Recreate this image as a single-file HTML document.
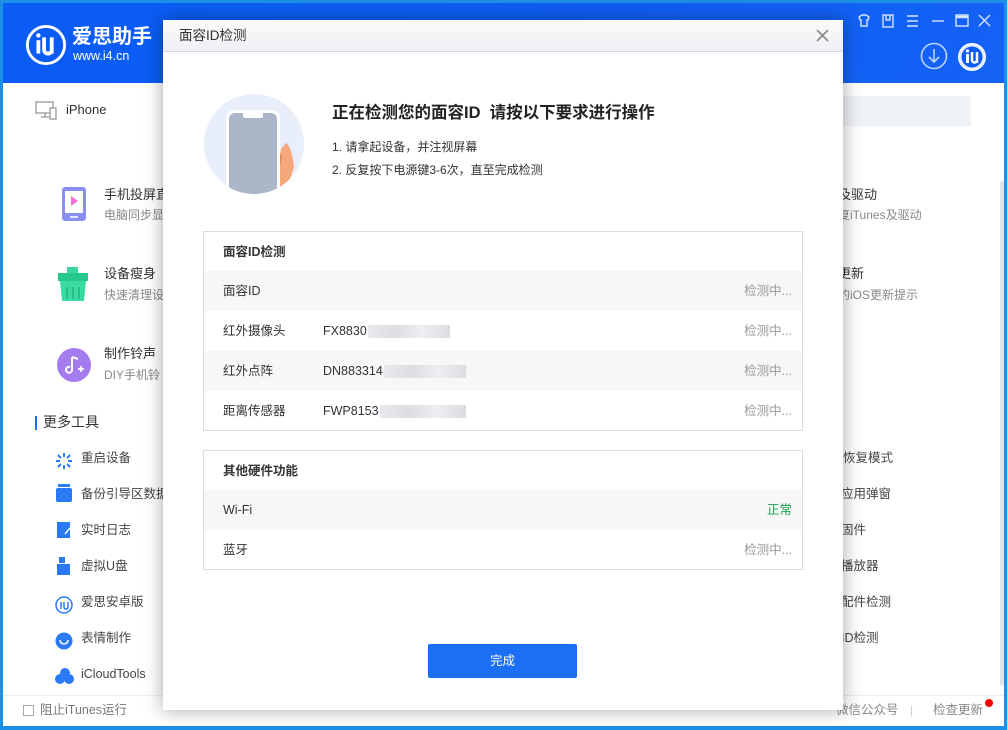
<!DOCTYPE html>
<html><head><meta charset="utf-8"><style>
*{margin:0;padding:0;box-sizing:border-box}
body{width:1007px;height:730px;overflow:hidden;background:#1e8fe6;font-family:"Liberation Sans","Noto Sans CJK SC",sans-serif;position:relative;line-height:1.2}
.abs{position:absolute}
.app{left:3px;top:3px;width:1001px;height:723px;background:#fff}
.hdr{left:0;top:0;width:1001px;height:80px;background:linear-gradient(120deg,#0a5cf5 0%,#0f5ff5 60%,#1463f5 100%)}
.t{position:absolute;white-space:nowrap;line-height:18px}
.lt{font-size:13px;color:#333}
.ls{font-size:12px;color:#888}
.tool{font-size:12.5px;color:#444}
.dlg{left:163px;top:20px;width:680px;height:690px;background:#fff;box-shadow:0 0 18px rgba(0,0,0,.35)}
.tb{left:0;top:0;width:680px;height:32px;background:linear-gradient(#fafbfc,#eef0f3);border-bottom:1px solid #d5d9e0}
.box{border:1px solid #dcdcdc;position:absolute;left:40px;width:600px}
.row{position:absolute;left:0;width:598px;height:40px;font-size:12.5px;color:#333;line-height:40px}
.row span{position:absolute;top:0;line-height:40px}
.g{background:#f7f7f7}
.st{right:10px;color:#999}
.blur{position:absolute;top:14px;height:13px;background:linear-gradient(90deg,#e8e9ee,#dcdee3,#eceef2,#dadce2)}
</style></head><body>
<div class="abs app">
 <div class="abs hdr">
  <svg class="abs" style="left:22px;top:21px" width="42" height="42" viewBox="0 0 44 44"><circle cx="22" cy="22" r="19.5" fill="none" stroke="#fff" stroke-width="3"/><rect x="12" y="17" width="4" height="14" fill="#fff"/><circle cx="14" cy="12" r="2.3" fill="#fff"/><path d="M20 14v13a4 4 0 0 0 8 0V14M28 14v17" fill="none" stroke="#fff" stroke-width="4"/></svg>
  <div class="t" style="left:69px;top:22px;color:#fff;font-size:20px;font-weight:bold;line-height:24px">爱思助手</div>
  <div class="t" style="left:70px;top:46px;color:#fff;font-size:12.5px;line-height:14px">www.i4.cn</div>
  <svg class="abs" style="left:852px;top:9px" width="145" height="18" viewBox="0 0 145 18" fill="none" stroke="#d6e4ff" stroke-width="1.4"><path d="M4 5l3-2h4l3 2-1 3h-1v6H6V8H5z"/><rect x="28" y="3" width="10" height="12"/><path d="M31 3v5h4V3"/><path d="M52 4h11M52 9h11M52 14h11"/><path d="M77 9h12"/><rect x="101" y="3" width="12" height="11"/><path d="M101 5h12" stroke-width="2.5"/><path d="M124 3l11 11M135 3l-11 11"/></svg>
  <svg class="abs" style="left:917px;top:39px" width="28" height="28"><circle cx="14" cy="14" r="12.5" fill="none" stroke="#bcd3ff" stroke-width="1.6"/><path d="M14 7v13M9 15l5 5 5-5" fill="none" stroke="#bcd3ff" stroke-width="1.6"/></svg>
  <svg class="abs" style="left:954px;top:39px" width="30" height="30"><circle cx="15" cy="15" r="13.5" fill="#e8efff" stroke="#fff" stroke-width="1"/><circle cx="15" cy="15" r="10.5" fill="#0a5cf5"/><rect x="9" y="12" width="3" height="9" fill="#fff"/><circle cx="10.5" cy="9" r="1.6" fill="#fff"/><path d="M15 10v8a2.5 2.5 0 0 0 5 0v-8M20 10v11" fill="none" stroke="#fff" stroke-width="2.5"/></svg>
 </div>
 <svg class="abs" style="left:32px;top:97px" width="24" height="22" fill="none" stroke="#999" stroke-width="1.3"><rect x="1" y="2" width="17" height="11"/><path d="M6 17h8M10 13v4"/><rect x="15" y="8" width="6" height="11" fill="#fff"/></svg>
 <div class="t lt" style="left:63px;top:98px">iPhone</div>
 <div class="abs" style="left:835px;top:93px;width:133px;height:30px;background:#eff2f6"></div>
 <div class="abs" style="left:997px;top:178px;width:4px;height:505px;background:#e0e2e6;border-radius:2px"></div>
 <svg class="abs" style="left:57px;top:183px" width="28" height="38"><rect x="2" y="1" width="24" height="34" rx="3" fill="#8a8ff5"/><rect x="5" y="5" width="18" height="22" fill="#fff"/><path d="M11 10l7 5-7 5z" fill="#f26ed8"/><path d="M10 31h8" stroke="#fff" stroke-width="1.5"/></svg>
 <div class="t lt" style="left:101px;top:183px">手机投屏直</div><div class="t ls" style="left:101px;top:203px">电脑同步显</div>
 <svg class="abs" style="left:52px;top:262px" width="36" height="38"><rect x="12" y="2" width="11" height="7" fill="#3ad69c"/><rect x="3" y="8" width="30" height="8" fill="#25c88d"/><path d="M5 16h26l-2 20H7z" fill="#3adba0"/><path d="M12 22v12M18 22v12M24 22v12" stroke="#1fa877" stroke-width="1.2"/></svg>
 <div class="t lt" style="left:101px;top:262px">设备瘦身</div><div class="t ls" style="left:101px;top:283px">快速清理设</div>
 <svg class="abs" style="left:53px;top:344px" width="36" height="36"><circle cx="18" cy="18" r="17" fill="#a57bf0"/><path d="M16 10v13a3 3 0 1 1-2-3M16 10l6 2" fill="none" stroke="#fff" stroke-width="2"/><path d="M22 22h6M25 19v6" stroke="#fff" stroke-width="1.8"/></svg>
 <div class="t lt" style="left:101px;top:342px">制作铃声</div><div class="t ls" style="left:101px;top:363px">DIY手机铃</div>
 <div class="abs" style="left:32px;top:413px;width:2px;height:14px;background:#1a6cf5"></div>
 <div class="t" style="left:40px;top:410px;font-size:14px;color:#333">更多工具</div>
 <div class="t tool" style="left:78px;top:446px">重启设备</div>
 <div class="t tool" style="left:78px;top:482px">备份引导区数据</div>
 <div class="t tool" style="left:78px;top:518px">实时日志</div>
 <div class="t tool" style="left:78px;top:554px">虚拟U盘</div>
 <div class="t tool" style="left:78px;top:590px">爱思安卓版</div>
 <div class="t tool" style="left:78px;top:626px">表情制作</div>
 <div class="t tool" style="left:78px;top:662px">iCloudTools</div>
 <svg class="abs" style="left:50px;top:447px" width="22" height="240" fill="#2a7af5"><g stroke="#2a7af5" stroke-width="2"><path d="M11 3v4M11 15v4M3 11h4M15 11h4M5 5l3 3M14 14l3 3M17 5l-3 3M8 14l-3 3"/></g>
 <rect x="3" y="38" width="16" height="14" rx="2"/><rect x="5" y="34" width="12" height="3"/>
 <rect x="4" y="72" width="13" height="16"/><path d="M12 84l5-6" stroke="#fff" stroke-width="1.5"/>
 <rect x="6" y="107" width="6" height="6"/><rect x="4" y="114" width="13" height="11"/>
 <circle cx="11" cy="155" r="8" fill="none" stroke-width="1.5" stroke="#2a7af5"/><path d="M8 152v7M11 152v5a2 2 0 0 0 4 0v-5" stroke="#2a7af5" stroke-width="1.5" fill="none"/>
 <circle cx="11" cy="191" r="8.5"/><path d="M7 190a4 4 0 0 0 8 0" stroke="#fff" stroke-width="1.5" fill="none"/>
 <circle cx="12" cy="223" r="5"/><circle cx="7" cy="229" r="5"/><circle cx="16" cy="229" r="5"/></svg>
 <div class="t lt" style="left:835px;top:183px">及驱动</div><div class="t ls" style="left:835px;top:203px">复iTunes及驱动</div>
 <div class="t lt" style="left:835px;top:262px">更新</div><div class="t ls" style="left:835px;top:283px">的iOS更新提示</div>
 <div class="t tool" style="left:840px;top:446px">恢复模式</div>
 <div class="t tool" style="left:838px;top:482px">应用弹窗</div>
 <div class="t tool" style="left:838px;top:518px">固件</div>
 <div class="t tool" style="left:838px;top:554px">播放器</div>
 <div class="t tool" style="left:838px;top:590px">配件检测</div>
 <div class="t tool" style="left:838px;top:626px">ID检测</div>
 <div class="abs" style="left:0;top:692px;width:1001px;height:1px;background:#eee"></div>
 <div class="abs" style="left:20px;top:702px;width:11px;height:11px;border:1px solid #aaa"></div>
 <div class="t" style="left:37px;top:698px;font-size:12.5px;color:#777">阻止iTunes运行</div>
 <div class="t" style="left:833px;top:698px;font-size:12.5px;color:#888">微信公众号</div>
 <div class="t" style="left:907px;top:698px;color:#ccc;font-size:12px">|</div>
 <div class="t" style="left:930px;top:698px;font-size:12.5px;color:#888">检查更新</div>
 <div class="abs" style="left:982px;top:696px;width:8px;height:8px;border-radius:50%;background:#f00"></div>
</div>
<div class="abs dlg">
 <div class="abs tb"><div class="t" style="left:16px;top:7px;font-size:13.5px;color:#333">面容ID检测</div>
  <svg class="abs" style="left:653px;top:9px" width="13" height="13" stroke="#888" stroke-width="1.6"><path d="M1 1l11 11M12 1L1 12"/></svg></div>
 <svg class="abs" style="left:40px;top:73px" width="102" height="102"><defs><clipPath id="c"><circle cx="51" cy="51" r="50"/></clipPath></defs><circle cx="51" cy="51" r="50" fill="#e8eefa"/><g clip-path="url(#c)"><path d="M78 56l5-6c4 2 7 14 8 24l-10 30H72z" fill="#f6a77c"/><rect x="23" y="17" width="54" height="100" rx="8" fill="#fff"/><rect x="26" y="20" width="48" height="95" rx="6" fill="#abb6c8"/><path d="M40 20h20v3a2 2 0 0 1-2 2H42a2 2 0 0 1-2-2z" fill="#fff"/><path d="M77 60c3 3 2 8 0 12" fill="#e08a66"/></g></svg>
 <div class="t" style="left:169px;top:82px;font-size:16.5px;font-weight:bold;color:#222;line-height:22px">正在检测您的面容ID&nbsp; 请按以下要求进行操作</div>
 <div class="t" style="left:169px;top:118px;font-size:12px;color:#333">1. 请拿起设备，并注视屏幕</div>
 <div class="t" style="left:169px;top:141px;font-size:12px;color:#333">2. 反复按下电源键3-6次，直至完成检测</div>
 <div class="box" style="top:211px;height:200px">
  <div class="row"><span style="left:19px;font-weight:bold">面容ID检测</span></div>
  <div class="row g" style="top:39px"><span style="left:19px">面容ID</span><span class="st">检测中...</span></div>
  <div class="row" style="top:79px"><span style="left:19px">红外摄像头</span><span style="left:119px">FX8830</span><div class="blur" style="left:164px;width:82px"></div><span class="st">检测中...</span></div>
  <div class="row g" style="top:119px"><span style="left:19px">红外点阵</span><span style="left:119px">DN883314</span><div class="blur" style="left:180px;width:82px"></div><span class="st">检测中...</span></div>
  <div class="row" style="top:159px"><span style="left:19px">距离传感器</span><span style="left:119px">FWP8153</span><div class="blur" style="left:176px;width:86px"></div><span class="st">检测中...</span></div>
 </div>
 <div class="box" style="top:430px;height:120px">
  <div class="row"><span style="left:19px;font-weight:bold">其他硬件功能</span></div>
  <div class="row g" style="top:39px"><span style="left:19px">Wi-Fi</span><span class="st" style="color:#1aa14a">正常</span></div>
  <div class="row" style="top:79px"><span style="left:19px">蓝牙</span><span class="st">检测中...</span></div>
 </div>
 <div class="abs" style="left:265px;top:624px;width:149px;height:34px;background:#1a6ff5;border-radius:2px;color:#fff;font-size:12.5px;text-align:center;line-height:34px">完成</div>
</div>
</body></html>
